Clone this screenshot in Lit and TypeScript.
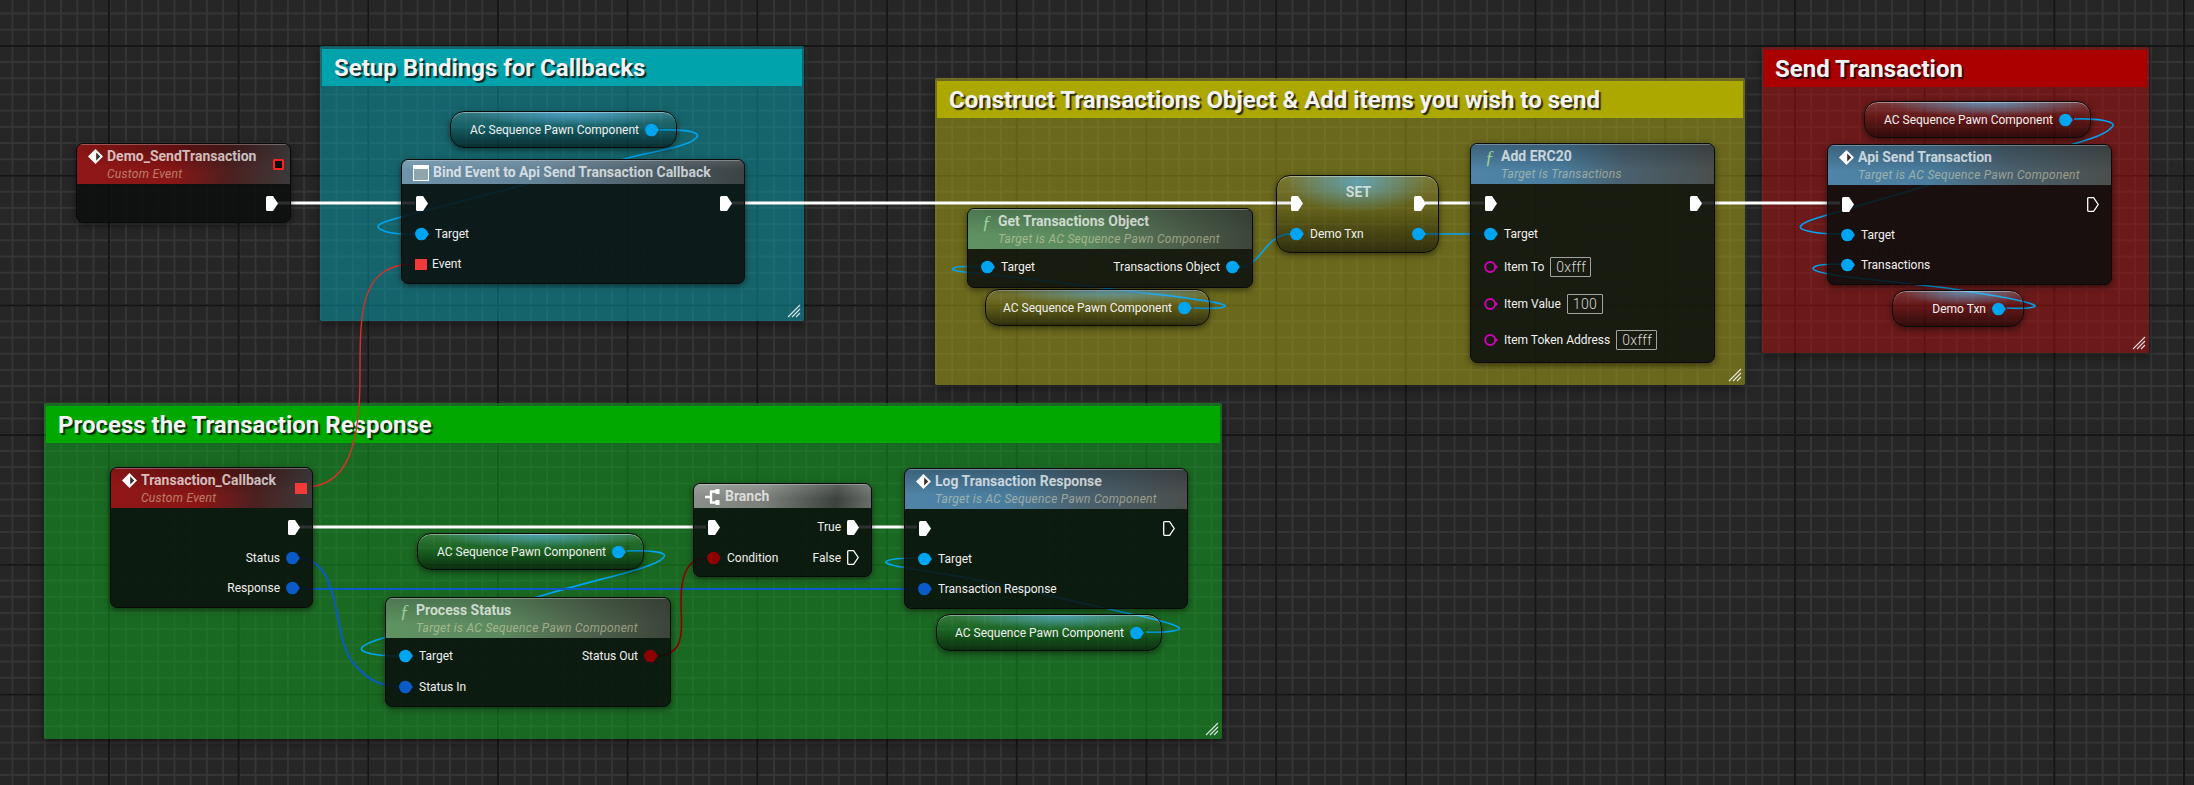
import { LitElement, css, html, svg } from 'lit';
import { customElement } from 'lit/decorators.js';

type PinKind = 'exec' | 'execOpen' | 'data' | 'struct' | 'bool' | 'ref' | 'delegate' | 'delegateOpen';

interface Pin {
  kind: PinKind;
  label?: string;
  value?: string;
  valueWidth?: number;
}

interface Row {
  left?: Pin;
  right?: Pin;
  tall?: boolean;
}

interface GraphNode {
  x: number;
  y: number;
  w: number;
  tint: 'event' | 'blue' | 'green' | 'bind' | 'branch';
  icon: 'event' | 'func' | 'bind' | 'branch';
  title: string;
  subtitle?: string;
  headerPin?: PinKind;
  rows: Row[];
}

const exec: Pin = { kind: 'exec' };
const execOpen: Pin = { kind: 'execOpen' };
const target: Pin = { kind: 'data', label: 'Target' };
const TARGET_PAWN = 'Target is AC Sequence Pawn Component';

const COMMENTS = [
  { x: 320, y: 46, w: 484, h: 275, tone: 'teal', title: 'Setup Bindings for Callbacks' },
  { x: 935, y: 78, w: 810, h: 307, tone: 'olive', title: 'Construct Transactions Object & Add items you wish to send' },
  { x: 1762, y: 47, w: 387, h: 306, tone: 'red', title: 'Send Transaction' },
  { x: 44, y: 403, w: 1178, h: 336, tone: 'green', title: 'Process the Transaction Response' },
];

const NODES: GraphNode[] = [
  {
    x: 76, y: 143, w: 215, tint: 'event', icon: 'event',
    title: 'Demo_SendTransaction', subtitle: 'Custom Event', headerPin: 'delegateOpen',
    rows: [{ right: exec }],
  },
  {
    x: 401, y: 159, w: 344, tint: 'bind', icon: 'bind',
    title: 'Bind Event to Api Send Transaction Callback',
    rows: [{ left: exec, right: exec }, { left: target }, { left: { kind: 'delegate', label: 'Event' } }],
  },
  {
    x: 967, y: 208, w: 286, tint: 'green', icon: 'func',
    title: 'Get Transactions Object', subtitle: TARGET_PAWN,
    rows: [{ left: target, right: { kind: 'data', label: 'Transactions Object' } }],
  },
  {
    x: 1470, y: 143, w: 245, tint: 'blue', icon: 'func',
    title: 'Add ERC20', subtitle: 'Target is Transactions',
    rows: [
      { left: exec, right: exec },
      { left: target },
      { tall: true, left: { kind: 'ref', label: 'Item To', value: '0xfff', valueWidth: 41 } },
      { tall: true, left: { kind: 'ref', label: 'Item Value', value: '100', valueWidth: 36 } },
      { tall: true, left: { kind: 'ref', label: 'Item Token Address', value: '0xfff', valueWidth: 41 } },
    ],
  },
  {
    x: 1827, y: 144, w: 285, tint: 'blue', icon: 'event',
    title: 'Api Send Transaction', subtitle: TARGET_PAWN,
    rows: [{ left: exec, right: execOpen }, { left: target }, { left: { kind: 'data', label: 'Transactions' } }],
  },
  {
    x: 110, y: 467, w: 203, tint: 'event', icon: 'event',
    title: 'Transaction_Callback', subtitle: 'Custom Event', headerPin: 'delegate',
    rows: [
      { right: exec },
      { right: { kind: 'struct', label: 'Status' } },
      { right: { kind: 'struct', label: 'Response' } },
    ],
  },
  {
    x: 385, y: 597, w: 286, tint: 'green', icon: 'func',
    title: 'Process Status', subtitle: TARGET_PAWN,
    rows: [
      { left: target, right: { kind: 'bool', label: 'Status Out' } },
      { left: { kind: 'struct', label: 'Status In' } },
    ],
  },
  {
    x: 693, y: 483, w: 179, tint: 'branch', icon: 'branch',
    title: 'Branch',
    rows: [
      { left: exec, right: { kind: 'exec', label: 'True' } },
      { left: { kind: 'bool', label: 'Condition' }, right: { kind: 'execOpen', label: 'False' } },
    ],
  },
  {
    x: 904, y: 468, w: 284, tint: 'blue', icon: 'event',
    title: 'Log Transaction Response', subtitle: TARGET_PAWN,
    rows: [
      { left: exec, right: execOpen },
      { left: target },
      { left: { kind: 'struct', label: 'Transaction Response' } },
    ],
  },
];

const PAWN = 'AC Sequence Pawn Component';
const GETTERS = [
  { x: 450, y: 111, w: 227, label: PAWN },
  { x: 985, y: 289, w: 225, label: PAWN },
  { x: 1864, y: 101, w: 227, label: PAWN },
  { x: 1892, y: 290, w: 132, label: 'Demo Txn' },
  { x: 417, y: 533, w: 227, label: PAWN },
  { x: 936, y: 614, w: 226, label: PAWN },
];

// Splines are eyeballed from the reference, they run under the nodes
const WIRES = {
  exec: [
    'M270 203H415', 'M727 203H1291', 'M1425 203H1484', 'M1700 203H1840',
    'M290 527H706', 'M859 527H917',
  ],
  data: [
    'M660 130C690 129 702 133 696 138C688 147 650 152 628 158L528 184L420 212C385 221 370 225 382 230C390 234 400 234 415 234',
    'M1194 308C1212 309 1230 308 1224 305C1215 300 1150 294 1120 290L1030 279C980 273 945 272 954 268C958 265 970 267 982 267',
    'M1239 267C1262 267 1264 234 1291 234',
    'M1422 234H1484',
    'M2074 119C2100 118 2118 122 2112 127C2105 135 2090 139 2077 143L1933 184L1817 218C1795 225 1798 229 1808 231C1818 234 1828 234 1840 234',
    'M2007 308C2020 309 2040 308 2034 305C2025 300 1990 295 1947 288L1840 276C1815 272 1808 269 1816 266C1822 264 1832 264 1840 264',
    'M627 551C650 550 670 552 663 558C655 568 600 578 537 597L383 638C360 645 356 650 368 653C378 656 388 656 398 656',
    'M1146 632C1160 633 1186 631 1178 627C1170 622 1140 616 1122 612L993 583C930 570 878 566 887 561C892 558 905 558 917 558',
  ],
  struct: [
    'M297 558C345 558 330 640 355 665C368 680 380 686 398 686',
    'M297 589H917',
  ],
  bool: ['M656 656C690 656 680 620 681 600C681 570 690 558 706 558'],
  delegate: ['M305 487C350 487 360 440 360 375C360 310 360 264 415 264'],
};

function pinGlyph(kind: PinKind) {
  switch (kind) {
    case 'exec':
      return html`<svg class="pin" width="12" height="15" viewBox="0 0 12 15">
        <path d="M1.5 0H7L12 7.5L7 15H1.5Q0 15 0 13.5V1.5Q0 0 1.5 0Z" fill="#fff" />
      </svg>`;
    case 'execOpen':
      return html`<svg class="pin" width="12" height="15" viewBox="0 0 12 15">
        <path d="M1.5 .7H6.6L11.2 7.5L6.6 14.3H1.5Q.7 14.3 .7 13.5V1.5Q.7 .7 1.5 .7Z" fill="none" stroke="#fff" stroke-width="1.3" />
      </svg>`;
    case 'delegate':
      return html`<span class="square"></span>`;
    case 'delegateOpen':
      return html`<span class="square open"></span>`;
    case 'ref':
      return html`<svg class="pin" width="14" height="14" viewBox="0 0 14 14">
        <circle cx="6.2" cy="7" r="5" fill="none" stroke="#d300b8" stroke-width="2" />
        <path d="M12 5L14 7L12 9Z" fill="#d300b8" />
      </svg>`;
    default: {
      const fill = kind === 'data' ? '#00a5f2' : kind === 'struct' ? '#0a5ac8' : '#8f0000';
      return html`<svg class="pin" width="14" height="14" viewBox="0 0 14 14">
        <circle cx="6.4" cy="7" r="6.3" fill=${fill} />
        <path d="M12 4.8L14 7L12 9.2Z" fill=${fill} />
      </svg>`;
    }
  }
}

function headerIcon(icon: GraphNode['icon']) {
  switch (icon) {
    case 'event':
      return html`<svg class="icon" width="15" height="15" viewBox="0 0 15 15">
        <path d="M7.5 0L15 7.5L7.5 15L0 7.5Z" fill="#fff" />
        <path d="M8.2 3.4L12.2 7.5L8.2 11.6Z" fill="#3a2a2a" />
      </svg>`;
    case 'func':
      return html`<span class="icon func">ƒ</span>`;
    case 'bind':
      return html`<svg class="icon" width="16" height="16" viewBox="0 0 16 16">
        <rect x=".5" y=".5" width="15" height="15" fill="#8fa5ad" stroke="#fff" />
        <rect x="0" y="0" width="16" height="4" fill="#fff" />
      </svg>`;
    case 'branch':
      return html`<svg class="icon" width="16" height="16" viewBox="0 0 16 16">
        <path d="M0 8H6M6 2.5V13.5M5 2.5H12M5 13.5H12" fill="none" stroke="#fff" stroke-width="2.4" />
        <rect x="10.5" y="0" width="4" height="5" fill="#fff" />
        <rect x="10.5" y="11" width="4" height="5" fill="#fff" />
      </svg>`;
  }
}

@customElement('app-root')
export class AppRoot extends LitElement {
  private renderPin(pin: Pin, side: 'left' | 'right') {
    const label = pin.label ? html`<span class="label">${pin.label}</span>` : null;
    const value = pin.value
      ? html`<span class="value" style="width: ${pin.valueWidth}px">${pin.value}</span>`
      : null;
    return html`<div class="cell ${side} ${pin.kind}">${pinGlyph(pin.kind)}${label}${value}</div>`;
  }

  private renderNode(n: GraphNode) {
    return html`
      <div class="node" style="left: ${n.x}px; top: ${n.y}px; width: ${n.w}px">
        <div class="header ${n.tint}">
          ${headerIcon(n.icon)}
          <div class="titles">
            <div class="title">${n.title}</div>
            ${n.subtitle ? html`<div class="subtitle">${n.subtitle}</div>` : null}
          </div>
          ${n.headerPin ? html`<div class="header-pin">${pinGlyph(n.headerPin)}</div>` : null}
        </div>
        <div class="rows">
          ${n.rows.map(
            (r) => html`<div class="row ${r.tall ? 'tall' : ''}">
              ${r.left ? this.renderPin(r.left, 'left') : html`<span></span>`}
              ${r.right ? this.renderPin(r.right, 'right') : null}
            </div>`,
          )}
        </div>
      </div>
    `;
  }

  render() {
    return html`
      ${COMMENTS.map(
        (c) => html`<section
          class="comment ${c.tone}"
          style="left: ${c.x}px; top: ${c.y}px; width: ${c.w}px; height: ${c.h}px"
        >
          <h2>${c.title}</h2>
          <svg class="grip" width="14" height="14" viewBox="0 0 14 14">
            <path d="M1 13L13 1M5 13L13 5M9 13L13 9" stroke="#fff" stroke-width="1.1" opacity=".85" />
          </svg>
        </section>`,
      )}

      <svg class="wires" width="2194" height="785" viewBox="0 0 2194 785" fill="none">
        ${WIRES.exec.map((d) => svg`<path d=${d} stroke="#fff" stroke-width="3" />`)}
        ${WIRES.data.map((d) => svg`<path d=${d} stroke="#00a5f2" stroke-width="1.6" />`)}
        ${WIRES.struct.map((d) => svg`<path d=${d} stroke="#0a5ac8" stroke-width="2" />`)}
        ${WIRES.bool.map((d) => svg`<path d=${d} stroke="#8f0000" stroke-width="1.6" />`)}
        ${WIRES.delegate.map((d) => svg`<path d=${d} stroke="#d8302c" stroke-width="1.4" />`)}
      </svg>

      ${GETTERS.map(
        (g) => html`<div class="getter" style="left: ${g.x}px; top: ${g.y}px; width: ${g.w}px">
          <span class="label">${g.label}</span>${pinGlyph('data')}
        </div>`,
      )}

      <div class="node set" style="left: 1276px; top: 175px; width: 163px">
        <div class="row">
          ${this.renderPin(exec, 'left')}
          <span class="set-title">SET</span>
          ${this.renderPin(exec, 'right')}
        </div>
        <div class="row">
          ${this.renderPin({ kind: 'data', label: 'Demo Txn' }, 'left')}
          ${this.renderPin({ kind: 'data' }, 'right')}
        </div>
      </div>

      ${NODES.map((n) => this.renderNode(n))}
    `;
  }

  static styles = css`
    :host {
      display: block;
      position: relative;
      width: 2194px;
      height: 785px;
      overflow: hidden;
      font-family: Roboto, 'Liberation Sans', sans-serif;
      background-color: #262626;
      /* graph paper: major lines every 8 cells */
      background-image:
        linear-gradient(90deg, #161616 0 2px, transparent 2px),
        linear-gradient(180deg, #161616 0 2px, transparent 2px),
        linear-gradient(90deg, #353535 0 2px, transparent 2px),
        linear-gradient(180deg, #353535 0 2px, transparent 2px);
      background-size:
        129.7px 129.7px,
        129.7px 129.7px,
        16.21px 16.21px,
        16.21px 16.21px;
      background-position:
        108px 0,
        0 45px,
        11.5px 0,
        0 12.5px;
    }

    .comment {
      position: absolute;
      box-sizing: border-box;
      padding: 3px 2px;
      box-shadow: 0 3px 8px rgba(0, 0, 0, 0.45);
      border-radius: 2px;
    }
    .comment h2 {
      margin: 0;
      height: 37px;
      line-height: 39px;
      padding-left: 12px;
      font-size: 24px;
      font-weight: 700;
      color: #f2f2f2;
      text-shadow: 2px 2px 1px rgba(0, 0, 0, 0.75);
    }
    .comment.teal {
      background: rgba(6, 158, 170, 0.52);
    }
    .comment.teal h2 {
      background: #00a2ab;
    }
    .comment.olive {
      background: rgba(168, 164, 20, 0.52);
    }
    .comment.olive h2 {
      background: #aca800;
    }
    .comment.red {
      background: rgba(170, 14, 14, 0.52);
    }
    .comment.red h2 {
      background: #aa0000;
      padding-left: 11px;
    }
    .comment.green {
      background: rgba(16, 166, 30, 0.52);
    }
    .comment.green h2 {
      background: #00a800;
    }
    .grip {
      position: absolute;
      right: 3px;
      bottom: 3px;
    }

    .wires {
      position: absolute;
      inset: 0;
    }

    .node {
      position: absolute;
      box-sizing: border-box;
      border: 1px solid #0a0a0a;
      border-radius: 7px;
      background: rgba(10, 14, 13, 0.86);
      box-shadow: 0 2px 6px rgba(0, 0, 0, 0.5);
      overflow: hidden;
    }

    .header {
      display: flex;
      align-items: flex-start;
      padding: 3px 6px 1px 11px;
      gap: 4px;
      min-height: 20px;
      box-shadow: inset 0 1px 0 rgba(255, 255, 255, 0.28);
    }
    .header.event {
      background:
        radial-gradient(ellipse 60% 70% at 50% 0, rgba(0, 0, 0, 0.35), transparent),
        linear-gradient(96deg, #8f1717 0, #8a1616 45%, #4c2020 72%, #3a3a3a 100%);
    }
    .header.blue {
      background:
        linear-gradient(0deg, transparent 35%, rgba(22, 30, 36, 0.35)),
        linear-gradient(100deg, #4f85a8 0, #4a7c9c 38%, #4a6270 62%, #4a4e4c 100%);
    }
    .header.green {
      background:
        linear-gradient(0deg, transparent 35%, rgba(24, 34, 24, 0.25)),
        linear-gradient(100deg, #5f9263 0, #5d8b60 40%, #50664f 68%, #3c443a 100%);
    }
    .header.bind {
      background:
        linear-gradient(180deg, rgba(255, 255, 255, 0.1), transparent 40%),
        linear-gradient(95deg, #6f94ab 0, #658397 40%, #4b5a62 75%, #3b4344 100%);
    }
    .header.branch {
      background:
        linear-gradient(180deg, rgba(255, 255, 255, 0.16), transparent 60%),
        linear-gradient(100deg, #8a8f8a 0, #7b807b 40%, #3c423e 80%, #6b6f6b 100%);
    }

    .icon {
      flex: none;
      margin-top: 2px;
    }
    .icon.func {
      width: 15px;
      text-align: center;
      font: italic 19px/17px 'Liberation Serif', serif;
      color: #98d098;
    }
    .titles {
      flex: 1;
      min-width: 0;
      white-space: nowrap;
    }
    .title {
      font-size: 14px;
      line-height: 18px;
      font-weight: 700;
      color: rgba(255, 255, 255, 0.72);
    }
    .subtitle {
      font-size: 12px;
      line-height: 18px;
      font-style: italic;
      letter-spacing: 0.28px;
      color: rgba(235, 225, 190, 0.5);
    }
    .header-pin {
      align-self: center;
      display: flex;
      margin-top: -2px;
    }

    .rows {
      padding: 4px 0 3px;
    }
    .header.green + .rows {
      padding: 3px 0 4px;
    }
    .row {
      display: flex;
      align-items: center;
      justify-content: space-between;
      height: 30.5px;
      padding: 0 12px 0 13px;
    }
    .row.tall {
      height: 36.5px;
    }
    .cell {
      display: flex;
      align-items: center;
      gap: 6px;
    }
    .cell.right {
      flex-direction: row-reverse;
    }
    .cell.exec.left .pin,
    .cell.execOpen.left .pin {
      margin-left: 1px;
    }
    .pin {
      flex: none;
      display: block;
    }
    .square {
      display: block;
      box-sizing: border-box;
      width: 12px;
      height: 11px;
      background: #f33a3a;
      margin-right: -1px;
    }
    .square.open {
      width: 11px;
      background: #0c0c0c;
      border: 2px solid #f22;
      border-radius: 1.5px;
      margin: 0;
    }
    .label {
      font-size: 12px;
      line-height: 16px;
      color: #f0f0f0;
      white-space: nowrap;
    }
    .value {
      box-sizing: border-box;
      height: 20px;
      line-height: 18px;
      border: 1px solid rgba(255, 255, 255, 0.6);
      border-radius: 1px;
      padding-left: 5px;
      font-size: 14px;
      font-weight: 300;
      letter-spacing: 0.3px;
      color: #d8d8d8;
    }

    .getter {
      position: absolute;
      box-sizing: border-box;
      display: flex;
      align-items: center;
      justify-content: flex-end;
      gap: 6px;
      height: 37px;
      padding-right: 17px;
      border: 1.5px solid #0a0a0a;
      border-radius: 14px;
      background:
        radial-gradient(ellipse 48% 42% at 55% 0, rgba(90, 180, 230, 0.7), transparent),
        linear-gradient(180deg, rgba(255, 255, 255, 0.12), rgba(0, 0, 0, 0.08) 45%, rgba(0, 0, 0, 0.55));
      box-shadow:
        inset 0 1px 0 rgba(255, 255, 255, 0.4),
        0 2px 6px rgba(0, 0, 0, 0.5);
    }

    .node.set {
      padding: 12px 0 3px;
      border-radius: 14px;
      background:
        radial-gradient(ellipse 45% 40% at 50% 8%, rgba(90, 180, 230, 0.7), transparent),
        linear-gradient(180deg, rgba(255, 255, 255, 0.1), rgba(0, 0, 0, 0.08) 45%, rgba(0, 0, 0, 0.55));
      box-shadow:
        inset 0 1px 0 rgba(255, 255, 255, 0.4),
        0 2px 6px rgba(0, 0, 0, 0.5);
    }
    .set-title {
      margin-top: -22px;
      font-size: 14px;
      font-weight: 700;
      color: rgba(255, 255, 255, 0.7);
    }
  `;
}

declare global {
  interface HTMLElementTagNameMap {
    'app-root': AppRoot;
  }
}
